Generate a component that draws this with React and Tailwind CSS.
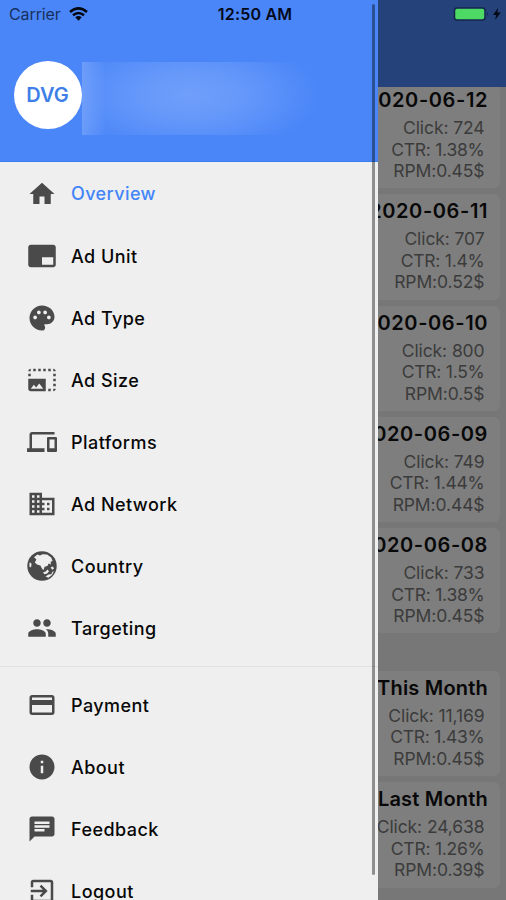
import {
  MdBrandingWatermark,
  MdBusiness,
  MdChat,
  MdCreditCard,
  MdDevices,
  MdExitToApp,
  MdHome,
  MdInfo,
  MdPalette,
  MdPeople,
  MdPhotoSizeSelectLarge
} from "react-icons/md";

const GlobeIcon = ({ className }) => (
  <svg className={className} viewBox="0 0 30 30">
    <circle cx="15" cy="15" fill="currentColor" r="14.7" />
    <g fill="#efefef">
      <path d="M7 6.2 10.5 3.6 13 4.6 15.5 3.2 20 3.4 24.2 6.4 25.6 10 23.6 10.8 24 13.4 21.6 12.4 20.4 15 17.6 15.8 16.4 19.2 14.6 17 13.4 14.6 10 13.6 7.8 11.4 9.4 8.6Z" />
      <path d="M2.6 11.2 4.6 12.8 4 16.4 2.4 15.4Z" />
      <path d="M16 21.4 18.6 20.6 20.6 18.6 22 20.2 20.2 22.4 17.4 23.2Z" />
      <path d="M23.6 16.4 25.8 15.4 27 17.4 25.2 18.8Z" />
      <path d="M18.4 25.4 21.6 23.4 24.4 23.2 25.4 20.8 26.8 20.6 25 24 21.4 26.8Z" />
    </g>
  </svg>
);

const mainItems = [
  { label: "Overview", icon: MdHome, active: true },
  { label: "Ad Unit", icon: MdBrandingWatermark },
  { label: "Ad Type", icon: MdPalette },
  { label: "Ad Size", icon: MdPhotoSizeSelectLarge },
  { label: "Platforms", icon: MdDevices },
  { label: "Ad Network", icon: MdBusiness },
  { label: "Country", icon: GlobeIcon },
  { label: "Targeting", icon: MdPeople }
];

const otherItems = [
  { label: "Payment", icon: MdCreditCard },
  { label: "About", icon: MdInfo },
  { label: "Feedback", icon: MdChat },
  { label: "Logout", icon: MdExitToApp }
];

const days = [
  { title: "2020-06-12", click: "724", ctr: "1.38%", rpm: "0.45$" },
  { title: "2020-06-11", click: "707", ctr: "1.4%", rpm: "0.52$" },
  { title: "2020-06-10", click: "800", ctr: "1.5%", rpm: "0.5$" },
  { title: "2020-06-09", click: "749", ctr: "1.44%", rpm: "0.44$" },
  { title: "2020-06-08", click: "733", ctr: "1.38%", rpm: "0.45$" }
];

const months = [
  { title: "This Month", click: "11,169", ctr: "1.43%", rpm: "0.45$" },
  { title: "Last Month", click: "24,638", ctr: "1.26%", rpm: "0.39$" }
];

const StatCard = ({ stat, titleClass }) => (
  <article className="h-[105.3px] shrink-0 rounded-md bg-[#7e7e7e] pr-3 text-right whitespace-nowrap">
    <h2 className={`pt-[5px] text-[20px] leading-6 text-[#080808] ${titleClass}`}>
      {stat.title}
    </h2>
    <div className="pt-[5px] pr-[3.500px] text-[17.5px] leading-[21.5px] text-[#3b3b3b]">
      <p className="tracking-[-0.1px]">Click: {stat.click}</p>
      <p className="tracking-[-0.25px]">CTR: {stat.ctr}</p>
      <p className="tracking-[-0.1px]">RPM:{stat.rpm}</p>
    </div>
  </article>
);

const NavItem = ({ item }) => {
  const Icon = item.icon;
  return (
    <a className="flex h-[62px] shrink-0 items-center gap-[14.500px] pl-[26.500px]">
      <Icon className="size-[30px] text-[#4a4a4a]" />
      <span
        className={
          item.active
            ? "pb-px text-[18px] font-medium tracking-[0.4px] text-[#4285f8]"
            : "text-[18px] font-medium tracking-[0.45px] text-[#080808]"
        }
      >
        {item.label}
      </span>
    </a>
  );
};

const StatusBar = () => (
  <div className="absolute inset-x-0 top-0 z-20 grid h-7 grid-cols-3 items-center pr-[5px] pl-[9px] text-[16px]">
    <div className="flex items-center gap-2 text-[#17305f]">
      <span className="tracking-[-0.1px]">Carrier</span>
      <svg className="h-[14px] w-[19px] text-[#04070f]" viewBox="0 0 19 14">
        <g fill="none" stroke="currentColor" strokeWidth="2.5">
          <path d="M1 5Q9.500 -2.200 18 5" />
          <path d="M4 8.300Q9.500 3.700 15 8.300" />
        </g>
        <path d="M6.300 10.300Q9.500 7.800 12.700 10.300L9.500 13.700Z" fill="currentColor" />
      </svg>
    </div>
    <span className="text-center text-[16px] font-semibold tracking-[0.2px] whitespace-nowrap text-[#04091a]">
      12:50 AM
    </span>
    <div className="flex items-center justify-end">
      <svg className="h-4 w-12" viewBox="0 0 48 16">
        <rect fill="#4cd964" height="12" rx="2.500" stroke="#14264d" strokeWidth="1.500" width="30.500" x="1.500" y="2" />
        <path d="M34 6q2 2 0 4z" fill="#14264d" />
        <path d="M45 2 40 9H43.300L42 14 47.800 6.500H44.400Z" fill="#050a16" />
      </svg>
    </div>
  </div>
);

const Drawer = () => (
  <aside className="absolute inset-y-0 left-0 z-10 flex w-[378px] flex-col overflow-hidden bg-[#efefef]">
    <header className="flex h-[162px] shrink-0 items-start border-b border-[#3b7df0] bg-[#4a86f8] pt-[61px] pl-[13.500px]">
      <div className="flex size-[68px] items-center justify-center rounded-full bg-white text-[20px] font-semibold text-[#3f7fe8]">
        DVG
      </div>
      <div className="mt-px h-[73px] w-[240px] bg-[radial-gradient(ellipse_130px_60px_at_45%_45%,#6f9ffa_0%,#6698fa_40%,#4a86f8_100%)]">
        <div className="h-full w-[24px] bg-linear-to-r from-[#82abfb]/60 to-transparent" />
      </div>
    </header>
    <nav className="flex flex-col pt-px">
      {mainItems.map((item) => (
        <NavItem item={item} key={item.label} />
      ))}
      <hr className="my-[7px] border-[#e0e0e0]" />
      {otherItems.map((item) => (
        <NavItem item={item} key={item.label} />
      ))}
    </nav>
    {/* scroll indicator */}
    <div className="absolute top-1 right-[3px] h-[871px] w-[3px] rounded-full bg-black/40" />
  </aside>
);

export default function App() {
  return (
    <main className="relative flex h-[900px] w-[506px] flex-col overflow-hidden bg-[#777777] font-[Inter,sans-serif]">
      <div className="z-[1] h-[87px] shrink-0 bg-[#25427b]" />
      <section className="-mt-1 flex flex-col gap-[6px] pr-[6px] pl-2">
        {days.map((day) => (
          <StatCard key={day.title} stat={day} titleClass="font-semibold tracking-[0.6px]" />
        ))}
      </section>
      <section className="mt-[37.500px] flex flex-col gap-[6px] pr-[6px] pl-2">
        {months.map((month) => (
          <StatCard key={month.title} stat={month} titleClass="font-semibold tracking-[0.2px]" />
        ))}
      </section>
      <Drawer />
      <StatusBar />
    </main>
  );
}
